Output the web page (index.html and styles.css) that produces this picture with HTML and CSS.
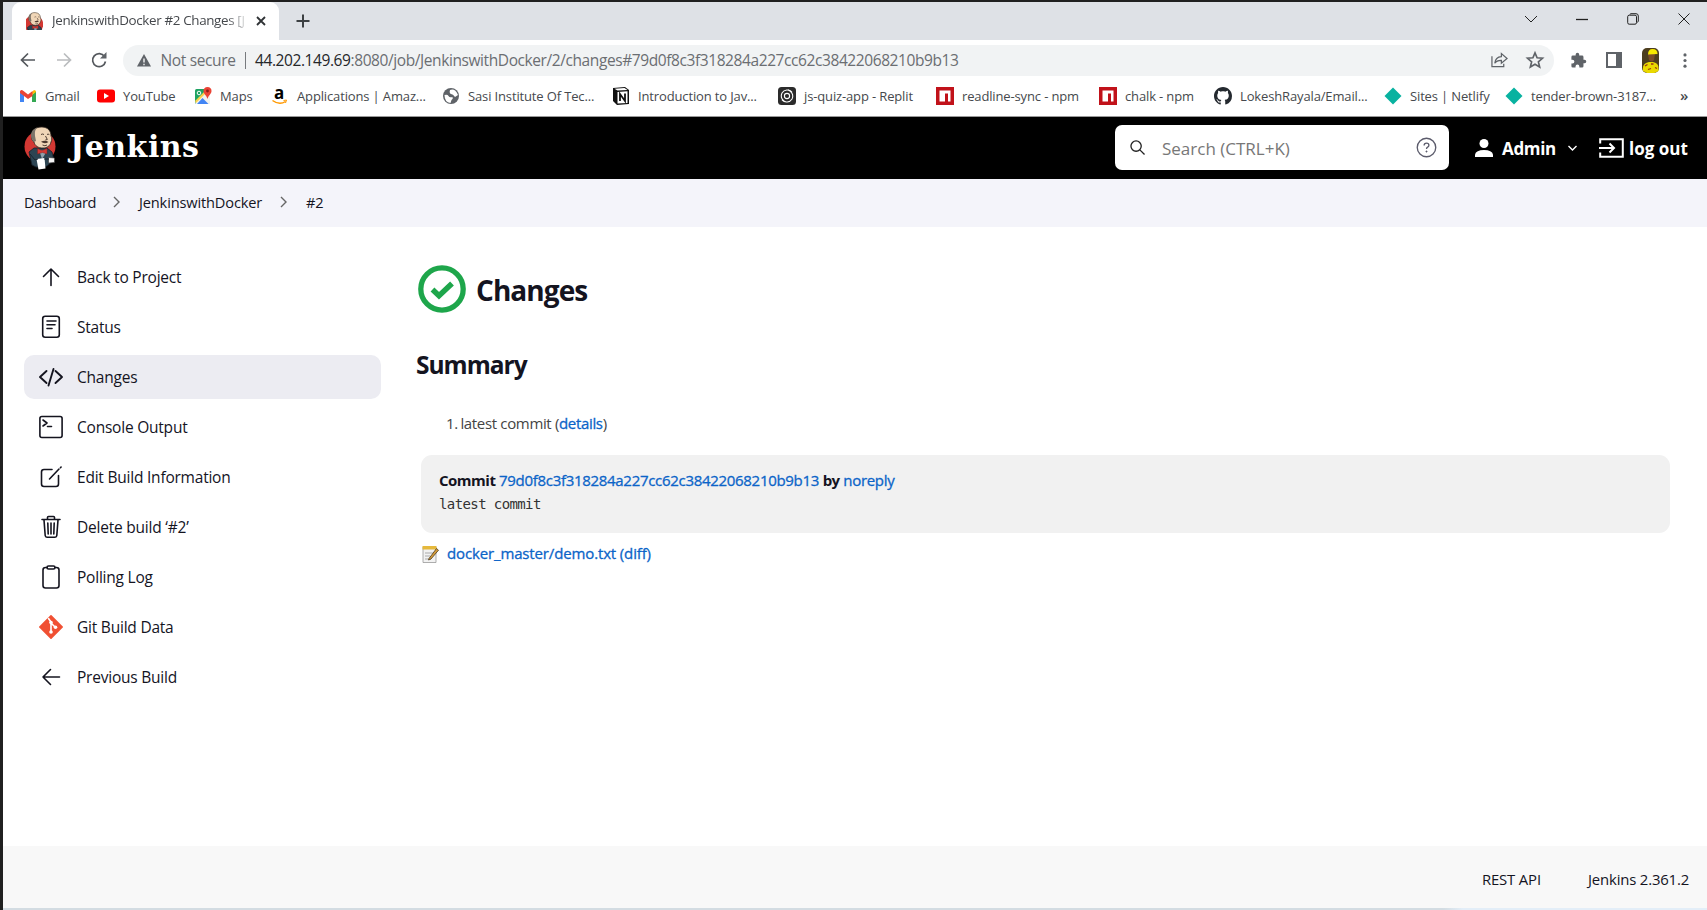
FILE: index.html
```html
<!DOCTYPE html>
<html lang="en">
<head>
<meta charset="utf-8">
<title>JenkinswithDocker #2 Changes [Jenkins]</title>
<link rel="stylesheet" href="styles.css">
</head>
<body>
<svg class="defs" width="0" height="0">
  <symbol id="butler" viewBox="0 0 32 44">
    <circle cx="16" cy="20.500" r="15.500" fill="#d33833"/>
    <path d="M5 26l5-4h13l5 4 2 8-7 6q-6 2-11 1l-4-2z" fill="#2c4452" stroke="#15202a" stroke-width=".8"/>
    <path d="M15 24l3 9 5-8z" fill="#8fa0ab"/>
    <path d="M8 10C8 4 12 .8 18 1c6 .2 9 4 9 9 1 2 1 4 0 6-1 4-4 6-8 6-5 0-8-2-9-6-2-1-3-4-2-6z" fill="#f0d6b7" stroke="#2b211a" stroke-width=".8"/>
    <path d="M7.500 12C6 8 8 3 13 1.600 10.500 5 11 7 11 10l1 5-2 1c-1-1-2-2-2.500-4z" fill="#7b7469"/>
    <path d="M17 15.800q4-2.200 7.500.2-4 2.600-7.500-.2z" fill="#4b382d"/>
    <path d="M17 8.500q1.500-1 3 0M23 8.500q1-.8 2.300 0M18.500 19q2.500 1.500 4.500 0M21.500 10l1.800 3.500-2 .5" fill="none" stroke="#3c2b22" stroke-width=".9"/>
    <path d="M13.500 22.500l4.500 2 5-2v5.500l-4.500-1.500-5 1.500z" fill="#d33833" stroke="#7c1c18" stroke-width=".4"/>
    <path d="M12.500 33l8-1 1 10.500-7 1z" fill="#fff"/>
    <path d="M24.500 31.500l6 .5v4.500l-6 .5z" fill="#f4f4f4" stroke="#333" stroke-width=".6"/>
    <path d="M6 28l5 6 3-1M20 33h5" fill="none" stroke="#15202a" stroke-width=".9"/>
  </symbol>
  <symbol id="npm" viewBox="0 0 18 18"><path d="M0 0h18v18H0z" fill="#c1121a"/><path d="M3.500 3.500h11v11H12V6.500H9v8H3.500z" fill="#fff"/></symbol>
  <symbol id="diamond" viewBox="0 0 18 18"><path d="M9 0.500L17.500 9 9 17.500.5 9z" fill="#08b2a0"/></symbol>
</svg>
<div class="window">
  <div class="tabstrip">
    <div class="tab">
      <svg class="tab-icon" viewBox="3 0 28 30"><use href="#butler" width="32" height="44"/></svg>
      <span class="tab-title">JenkinswithDocker #2 Changes [J</span>
      <svg class="tab-close" viewBox="0 0 10 10"><path d="M1 1l8 8M9 1L1 9"/></svg>
    </div>
    <svg class="newtab" viewBox="0 0 14 14"><path d="M7 0.500v13M.5 7h13"/></svg>
    <div class="wincontrols">
      <svg width="14" height="12" viewBox="0 0 14 12"><path d="M1 3l6 6 6-6"/></svg>
      <svg width="12" height="12" viewBox="0 0 12 12"><path d="M0 6.500h12" stroke-width="1.300"/></svg>
      <svg width="12" height="12" viewBox="0 0 12 12"><rect x=".7" y="2.200" width="8.800" height="9" rx="1.500"/><path d="M3 1.500Q3 .7 4 .7h5q2.300 0 2.300 2.300v5q0 1-1 1.300"/></svg>
      <svg width="12" height="12" viewBox="0 0 12 12"><path d="M.5.5l11 11M11.500.5l-11 11"/></svg>
    </div>
  </div>
  <div class="toolbar">
    <svg class="nav" viewBox="0 0 16 16"><path d="M15 8H2M8 1.500L1.500 8 8 14.500"/></svg>
    <svg class="nav dim" viewBox="0 0 16 16"><path d="M1 8h13M8 1.500L14.500 8 8 14.500"/></svg>
    <svg class="nav" viewBox="0 0 16 16"><path d="M13.500 4.500A6.500 6.500 0 1 0 14.500 9.500"/><path d="M15.500 0v6.500H9z" fill="#5f6368" stroke="none"/></svg>
    <div class="omnibox">
      <svg class="warn" viewBox="0 0 14 13"><path d="M7 0l7 12.500H0z" fill="#5f6368"/><path d="M7 4.500v4M7 9.700v1.500" stroke="#fff" stroke-width="1.300"/></svg>
      <span class="notsecure">Not secure</span><i class="bar"></i>
      <span class="url"><b>44.202.149.69</b>:8080/job/JenkinswithDocker/2/changes#79d0f8c3f318284a227cc62c38422068210b9b13</span>
      <svg class="share" viewBox="0 0 18 16"><path d="M1 4v11h12.500v-3"/><path d="M4 11.500C4.500 7 7 4.700 11 4.500V1.200L17 6.500l-6 5V8.300C8 8.200 5.500 9 4 11.500z"/></svg>
      <svg class="star" viewBox="0 0 24 24"><path d="M12 2.500l2.800 6.600 7.200.6-5.500 4.700 1.700 7L12 17.700l-6.200 3.700 1.700-7L2 9.700l7.200-.6z"/></svg>
    </div>
    <svg class="puzzle" viewBox="0 0 24 24"><path d="M20.500 11H19V7a2 2 0 0 0-2-2h-4V3.500a2.500 2.500 0 0 0-5 0V5H4a2 2 0 0 0-2 2v3.800h1.500a2.700 2.700 0 0 1 0 5.400H2V20a2 2 0 0 0 2 2h3.800v-1.500a2.700 2.700 0 0 1 5.400 0V22H17a2 2 0 0 0 2-2v-4h1.500a2.500 2.500 0 0 0 0-5z"/></svg>
    <svg class="panel" viewBox="0 0 16 16"><rect x="1" y="1" width="14" height="14" fill="none" stroke="#5f6368" stroke-width="2"/><path d="M10 0h6v16h-6z" fill="#5f6368"/></svg>
    <svg class="avatar" viewBox="0 0 17 25"><rect width="17" height="25" rx="5" fill="#4c3d1e"/><path d="M1 23q-1-6 3-8l3-1h4q5 1 5.500 5v4l-4 2H5z" fill="#ead900"/><path d="M6 6h7l-1 6q-2 3-5 0z" fill="#7a4c28"/><path d="M6 6.500q0-5.500 4.500-5.500 5 0 5 5z" fill="#f7ea00"/><path d="M3 18l2.500-1.500M9 16h2.500M6 21.500l3-1M13 19.500l2 1" stroke="#9b3513" stroke-width="1.300"/></svg>
    <svg class="dots" viewBox="0 0 4 16"><circle cx="2" cy="2" r="1.700"/><circle cx="2" cy="8" r="1.700"/><circle cx="2" cy="14" r="1.700"/></svg>
  </div>
  <div class="bookmarks">
    <a class="w1"><svg viewBox="0 0 18 18"><path d="M1 4v11h4V8z" fill="#4285f4"/><path d="M17 4v11h-4V8z" fill="#34a853"/><path d="M13 8V5l2-2q2 0 2 2z" fill="#fbbc04"/><path d="M1 4.500Q2 2 4.500 4L9 7.500 13.500 4v5L9 12 1 6z" fill="#ea4335"/></svg><span>Gmail</span></a>
    <a class="w2"><svg viewBox="0 0 18 18"><rect y="2.500" width="18" height="13" rx="3" fill="#f00"/><path d="M7 6l5 3-5 3z" fill="#fff"/></svg><span>YouTube</span></a>
    <a class="w3"><svg viewBox="0 0 18 18"><rect x="1" y="2" width="15" height="15" rx="1.500" fill="#1ea362"/><path d="M1 16L14 3l2 2v12H2z" fill="#f2f2ee"/><path d="M3 17l5.500-6 6 6z" fill="#4285f4"/><path d="M1 14L13 2l1 2L2 16z" fill="#fbd14b"/><path d="M13.500 0q4 .3 4 4c0 3-3 4-4 8-1-4-4-5-4-8q0-3.700 4-4z" fill="#ea4335"/><circle cx="13.500" cy="4" r="1.400" fill="#8b1d16"/><circle cx="5" cy="6" r="1.800" fill="none" stroke="#fff"/></svg><span>Maps</span></a>
    <a class="w4"><svg viewBox="0 0 18 18"><text x="3" y="12" class="amz">a</text><path d="M1.500 13.500q7 5 13 1" fill="none" stroke="#f90" stroke-width="1.500"/><path d="M12.500 13.500l3-.5-1 3" fill="none" stroke="#f90"/></svg><span>Applications | Amaz...</span></a>
    <a class="w5"><svg viewBox="0 0 18 18"><circle cx="9" cy="9" r="8" fill="#5f6368"/><path d="M2.500 8q3-1 4 1t4 1q1 2-1 3l-1 3q-6-1-6-8zM8 3q5-2 8 5l-3 2q-2-3-4-3-2-1-1-4z" fill="#fff"/></svg><span>Sasi Institute Of Tec...</span></a>
    <a class="w6"><svg viewBox="0 0 18 18"><path d="M1 1l12-1 4 3v14L5 18l-4-4z" fill="#111"/><path d="M2.500 1.700L12.500 1l3 2-10 .6zM5.500 5l10-.7v11.700l-10 .6z" fill="#fff"/><path d="M8 14V7l5 7V6.500" fill="none" stroke="#111" stroke-width="1.800"/></svg><span>Introduction to Jav...</span></a>
    <a class="w7"><svg viewBox="0 0 18 18"><rect width="18" height="18" rx="3.500" fill="#2b2b2b"/><g fill="none" stroke="#fff" stroke-width="1.100"><circle cx="9" cy="9" r="2.600"/><path d="M14 5a6.300 6.300 0 0 0-10 1 6 6 0 0 0 2 8l2 1M4 13a6.300 6.300 0 0 0 10-1 6 6 0 0 0-2-8l-2-1"/></g></svg><span>js-quiz-app - Replit</span></a>
    <a class="w8"><svg><use href="#npm"/></svg><span>readline-sync - npm</span></a>
    <a class="w9"><svg><use href="#npm"/></svg><span>chalk - npm</span></a>
    <a class="w10"><svg viewBox="0 0 16 16"><path fill="#24292f" d="M8 0C3.580 0 0 3.580 0 8c0 3.540 2.290 6.530 5.470 7.590.4.070.55-.17.55-.38 0-.19-.01-.82-.01-1.490-2.010.37-2.530-.49-2.690-.94-.09-.23-.48-.94-.82-1.130-.28-.15-.68-.52-.01-.53.63-.01 1.080.58 1.230.82.720 1.210 1.870.87 2.330.66.070-.52.280-.87.510-1.070-1.780-.2-3.640-.89-3.640-3.950 0-.87.310-1.590.820-2.150-.08-.2-.36-1.020.080-2.120 0 0 .67-.21 2.200.82.640-.18 1.320-.27 2-.27s1.360.09 2 .27c1.530-1.040 2.200-.82 2.200-.82.440 1.100.160 1.920.080 2.120.510.560.820 1.270.820 2.150 0 3.070-1.870 3.750-3.650 3.950.290.250.540.730.540 1.480 0 1.070-.01 1.930-.01 2.200 0 .21.150.46.550.38A8.010 8.010 0 0 0 16 8c0-4.420-3.580-8-8-8z"/></svg><span>LokeshRayala/Email...</span></a>
    <a class="w11"><svg><use href="#diamond"/></svg><span>Sites | Netlify</span></a>
    <a class="w12"><svg><use href="#diamond"/></svg><span>tender-brown-3187...</span></a>
    <span class="more">»</span>
  </div>
  <header class="header">
    <svg class="logo" viewBox="0 0 32 44"><use href="#butler" width="32" height="44"/></svg>
    <span class="brand">Jenkins</span>
    <div class="search">
      <svg class="mag" viewBox="0 0 16 16"><circle cx="6.500" cy="6.500" r="5.500"/><path d="M10.500 10.500l5 5"/></svg>
      <span class="placeholder">Search (CTRL+K)</span>
      <svg class="help" viewBox="0 0 22 22"><circle cx="11" cy="11" r="9.700"/><path d="M8.500 8.800q0-2.400 2.500-2.400t2.500 2.200q0 1.300-1.300 2-1.200.7-1.200 2"/><circle cx="11" cy="15.200" r=".7" fill="#5c5c6c" stroke-width=".6"/></svg>
    </div>
    <svg class="person" viewBox="0 0 18 18"><circle cx="9" cy="4.500" r="4.500"/><path d="M0 18v-2.500Q1 11 9 11t9 4.500V18z"/></svg>
    <span class="admin">Admin</span>
    <svg class="chev" viewBox="0 0 10 7"><path d="M1 1l4 4 4-4"/></svg>
    <svg class="exit" viewBox="0 0 25 20"><path d="M1.200 5.500V1.200h22.600v17.600H1.200v-4.300M0 10h14M10.500 5.500L15 10l-4.500 4.500"/></svg>
    <span class="logout">log out</span>
  </header>
  <nav class="crumbs">
    <span class="c1">Dashboard</span><svg viewBox="0 0 7 12"><path d="M1 1l5 5-5 5"/></svg>
    <span class="c2">JenkinswithDocker</span><svg viewBox="0 0 7 12"><path d="M1 1l5 5-5 5"/></svg>
    <span>#2</span>
  </nav>
  <div class="body">
    <aside class="side">
      <a><svg viewBox="0 0 24 24"><path d="M12 20.500V4M4.500 11.500L12 4l7.500 7.500"/></svg><span>Back to Project</span></a>
      <a><svg viewBox="0 0 24 24"><rect x="3.700" y="1.200" width="16.600" height="21" rx="2.500"/><path d="M8 6h9M8 9.700h8M8 13.500h5"/></svg><span>Status</span></a>
      <a class="active"><svg viewBox="0 0 24 24"><path d="M7.500 6L1 12l6.500 6M16.500 6l6.500 6-6.500 6M14.500 4l-5 16.500" stroke-width="1.900"/></svg><span>Changes</span></a>
      <a><svg viewBox="0 0 24 24"><rect x=".9" y="1.500" width="22.200" height="21" rx="2"/><path d="M4 5l4 3-4 3M8.500 11.500h4"/></svg><span>Console Output</span></a>
      <a><svg viewBox="0 0 24 24"><path d="M13 4.500H5q-2.500 0-2.500 2.500v12q0 2.500 2.500 2.500h12q2.500 0 2.500-2.500V10.500M10.500 14L20 4M21.500 2.600l.6-.6"/></svg><span>Edit Build Information</span></a>
      <a><svg viewBox="0 0 24 24"><path d="M3 4.500h18M5 5l1.200 15.500q.1 1.700 1.800 1.700h8q1.700 0 1.800-1.700L19 5M8.500 4V2.500q0-1 1-1h5q1 0 1 1V4M8.800 8l.4 11M12 8v11M15.200 8l-.4 11"/></svg><span>Delete build ‘#2’</span></a>
      <a><svg viewBox="0 0 24 24"><path d="M8 2.500H6.500q-2.500 0-2.500 2.500v15.500q0 2.500 2.500 2.500h11q2.500 0 2.500-2.500V5q0-2.500-2.500-2.500H16"/><rect x="8" y="1" width="8" height="3" rx="1.500"/></svg><span>Polling Log</span></a>
      <a><svg viewBox="0 0 24 24"><path d="M12 .8L23.200 12 12 23.200.8 12z" fill="#f05033" stroke="#f05033" stroke-linejoin="round"/><path d="M9.500 3.500L12 7v10M12 8l4 4" stroke="#fff"/><g fill="#fff" stroke="none"><circle cx="12" cy="7.500" r="1.800"/><circle cx="12" cy="17" r="1.800"/><circle cx="16.500" cy="12.300" r="1.800"/></g></svg><span>Git Build Data</span></a>
      <a><svg viewBox="0 0 24 24"><path d="M20.500 12H4M11.500 4.500L4 12l7.500 7.500"/></svg><span>Previous Build</span></a>
    </aside>
    <main class="main">
      <h1><svg viewBox="0 0 48 48"><circle cx="24" cy="24" r="21.200"/><path d="M14.500 24.500l6.500 6.200L34 18.500" stroke-width="5.500"/></svg><span>Changes</span></h1>
      <h2>Summary</h2>
      <ol><li><span class="num">1.</span> latest commit (<a>details</a>)</li></ol>
      <div class="commit">
        <p class="who"><b>Commit</b> <a>79d0f8c3f318284a227cc62c38422068210b9b13</a> <b>by</b> <a>noreply</a></p>
        <pre>latest commit</pre>
      </div>
      <p class="file"><svg viewBox="0 0 17 18"><path d="M1 2h13v15.500H1z" fill="#f2f2f2" stroke="#999" stroke-width=".8"/><path d="M.5 1h14v3.500H.5z" fill="#e6b93c"/><path d="M3 8h8M3 11h5M3 14h6" stroke="#aaa"/><path d="M7 13.500L14.500 3.500l2 1.700L9 14l-2.500 1z" fill="#d49b3a" stroke="#4d3b1e" stroke-width=".8"/></svg><a>docker_master/demo.txt (diff)</a></p>
    </main>
  </div>
  <footer class="footer"><span class="f1">REST API</span><span class="f2">Jenkins 2.361.2</span></footer>
  <div class="edge"></div>
</div>
</body>
</html>
```
FILE: styles.css
```css
* { box-sizing: border-box; }
body { margin: 0; background: #202020; font-family: "Open Sans", "Noto Sans", sans-serif; color: #14141f; }
svg { flex: none; display: block; overflow: visible; }
.defs { position: absolute; }
.window { width: 1707px; height: 910px; padding: 2px 0 0 3px; display: flex; flex-direction: column; overflow: hidden; white-space: nowrap; }
.tabstrip { height: 38px; background: #dee1e6; display: flex; align-items: center; padding: 0 17px 0 9px; flex: none; }
.tab { width: 267px; height: 38px; background: #fff; border-radius: 9px 9px 0 0; display: flex; align-items: center; padding: 0 13px 1px 14px; }
.tab-icon { width: 17px; height: 18px; overflow: hidden; }
.tab-title { width: 197px; margin-left: 9px; padding-bottom: 2px; overflow: hidden; font-size: 13.4px; letter-spacing: -.35px; color: #45484c; -webkit-mask-image: linear-gradient(90deg, #000 175px, transparent 197px); mask-image: linear-gradient(90deg, #000 175px, transparent 197px); }
.tab-close { width: 10px; height: 10px; margin-left: 7px; fill: none; stroke: #2f3235; stroke-width: 1.8; }
.newtab { width: 14px; height: 14px; margin-left: 17px; fill: none; stroke: #3c4043; stroke-width: 2; }
.wincontrols { margin-left: auto; display: flex; gap: 39px; align-items: center; margin-top: -5px; fill: none; stroke: #222; }
.wincontrols svg { fill: none; }
.wincontrols svg:first-child { margin-right: -1px; }
.toolbar { height: 41px; background: #fff; display: flex; align-items: center; padding: 0 20px 1px 17px; flex: none; }
.nav { width: 16px; height: 16px; margin-right: 19.500px; fill: none; stroke: #54585d; stroke-width: 1.7; }
.dim { stroke: #babcbe; }
.omnibox { width: 1431px; height: 31px; margin-left: -4px; border-radius: 16px; background: #f1f3f4; display: flex; align-items: center; padding: 0 10px 0 14px; font-size: 15.5px; color: #6b6e72; }
.warn { width: 14px; height: 13px; }
.notsecure { width: 75px; margin-left: 10px; letter-spacing: -.35px; }
.bar { width: 1.500px; height: 17px; margin: 0 9px; background: #777a7e; }
.url { letter-spacing: -.41px; }
.url b { font-weight: 400; color: #25272a; }
.share { width: 17px; height: 16px; margin-left: auto; fill: none; stroke: #5f6368; stroke-width: 1.3; }
.star { width: 18px; height: 18px; margin-left: 18px; fill: none; stroke: #5f6368; stroke-width: 2.2; }
.puzzle { width: 17px; height: 17px; margin-left: 16px; fill: #5f6368; }
.panel { width: 16px; height: 16px; margin-left: 19px; }
.avatar { width: 17px; height: 25px; margin-left: 20px; }
.dots { width: 4px; height: 15px; margin-left: auto; fill: #5f6368; }
.bookmarks { height: 36px; background: #fff; border-bottom: 1px solid #999; display: flex; align-items: center; padding: 0 0 5px 16px; font-size: 13px; color: #46494d; flex: none; }
.bookmarks a { display: flex; align-items: center; gap: 8px; flex: none; letter-spacing: -.14px; }
.bookmarks a svg { width: 18px; height: 18px; }
.more { font-size: 15px; font-weight: 600; margin-top: -3px; }
.amz { font: bold 17px "Open Sans", sans-serif; fill: #000; }
.w1 { width: 78px; } .w2 { width: 97px; } .w3 { width: 77px; } .w4 { width: 171px; } .w5 { width: 170px; } .w6 { width: 166px; }
.w7 { width: 158px; } .w8 { width: 163px; } .w9 { width: 115px; } .w10 { width: 170px; } .w11 { width: 121px; } .w12 { width: 175px; }
.header { height: 62px; background: #000; color: #fff; display: flex; align-items: center; padding-left: 21px; flex: none; }
.logo { width: 32px; height: 44px; }
.brand { width: 1046px; margin: -3px 0 0 14px; padding-right: 0; font: bold 30px "DejaVu Serif", serif; letter-spacing: .5px; margin-right: -1px; }
.search { width: 334px; height: 45px; margin-top: -1px; border-radius: 7px; background: #fff; display: flex; align-items: center; padding: 0 12px 0 15px; flex: none; }
.mag { width: 15px; height: 15px; fill: none; stroke: #222; stroke-width: 1.4; }
.placeholder { margin: 1px 0 0 17px; font-size: 17px; color: #777; }
.help { width: 21px; height: 21px; margin-left: auto; fill: none; stroke: #5c5c6c; stroke-width: 1.4; }
.person { width: 18px; height: 18px; margin-left: 26px; fill: #fff; }
.admin, .logout { font-weight: 700; font-size: 17px; letter-spacing: -.35px; }
.logout { letter-spacing: 0; }
.admin { width: 55px; margin-left: 9px; }
.chev { width: 11px; height: 7px; margin-left: 10px; fill: none; stroke: #fff; stroke-width: 1.4; }
.exit { width: 25px; height: 20px; margin-left: 21px; fill: none; stroke: #fff; stroke-width: 2; }
.logout { margin-left: 5px; }
.crumbs { height: 48px; background: #f4f4fa; display: flex; align-items: center; padding: 0 0 2px 21px; font-size: 14.600px; letter-spacing: -.15px; flex: none; }
.c1 { width: 71px; letter-spacing: -.35px; } .c2 { width: 123px; }
.crumbs svg { width: 7px; height: 12px; margin: 0 19px 0 18px; fill: none; stroke: #666; stroke-width: 1.4; }
.body { flex: 1; background: #fff; display: flex; min-height: 0; }
.side { width: 378px; padding: 28px 0 0 21px; display: flex; flex-direction: column; gap: 6px; flex: none; }
.side a { height: 44px; border-radius: 10px; display: flex; align-items: center; gap: 14px; padding-left: 15px; font-size: 15.500px; letter-spacing: -.22px; }
.side svg { width: 24px; height: 24px; fill: none; stroke: #14141f; stroke-width: 1.6; stroke-linecap: round; stroke-linejoin: round; }
.side .active { background: #ececf2; }
.main { padding: 37px 37px 0 35px; flex: 1; font-size: 15px; }
h1 { height: 49px; margin: 0 0 0 2px; display: flex; align-items: center; gap: 10px; font-size: 28px; font-weight: 700; letter-spacing: -.95px; }
h1 span { padding-top: 3px; }
h1 svg { width: 48px; height: 48px; fill: none; stroke: #1ea64b; stroke-width: 5.300; }
h2 { height: 34px; margin: 35px 0 0; font-size: 24.500px; line-height: 34px; font-weight: 700; letter-spacing: -1px; }
ol { list-style: none; margin: 29px 0 0 30px; padding: 0; height: 24px; line-height: 24px; color: #444; letter-spacing: -.34px; }
.num { margin-right: -1px; }
.main a { color: #0b64c8; -webkit-text-stroke: .3px #0b64c8; }
.commit { height: 78px; margin: 20px 0 0 5px; padding: 13px 18px; border-radius: 11px; background: #f1f1f1; }
.who { margin: 0; line-height: 24px; letter-spacing: -.3px; }
.who b { font-weight: 700; letter-spacing: -.5px; }
pre { margin: 1px 0 0; font: 14px/23px "DejaVu Sans Mono", monospace; letter-spacing: -.6px; color: #333; }
.file { margin: 8px 0 0 6px; height: 24px; display: flex; align-items: center; gap: 8px; letter-spacing: -.14px; }
.file svg { width: 17px; height: 18px; margin-top: 2px; }
.footer { height: 62px; background: #f8f8f8; display: flex; align-items: center; justify-content: flex-end; padding: 3px 19px 0 0; font-size: 14.900px; letter-spacing: -.17px; flex: none; }
.f1 { width: 106px; } .f2 { width: 100px; }
.edge { height: 2px; background: linear-gradient(90deg, #d3dce2 1440px, #e3eef8 1460px); flex: none; }
```
